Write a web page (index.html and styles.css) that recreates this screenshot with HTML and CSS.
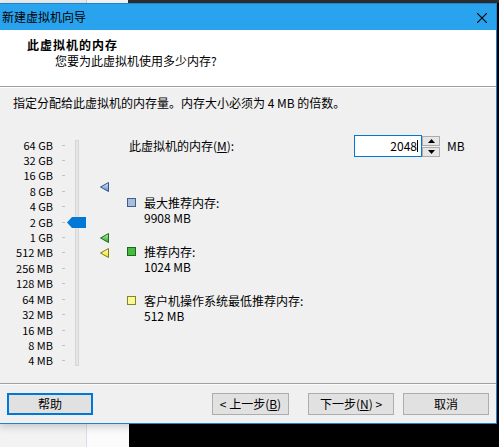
FILE: index.html
```html
<!DOCTYPE html>
<html lang="zh-CN">
<head>
<meta charset="utf-8">
<title>新建虚拟机向导</title>
<link rel="stylesheet" href="styles.css">
</head>
<body>
<div class="window">
  <div class="titlebar">
    <span class="title">新建虚拟机向导</span>
    <svg class="close" width="10" height="10" viewBox="0 0 10 10"><path d="M0 0L10 10M10 0L0 10" stroke="#000" stroke-width="1.1"/></svg>
  </div>
  <div class="header">
    <div class="h-title">此虚拟机的内存</div>
    <div class="h-sub">您要为此虚拟机使用多少内存?</div>
  </div>
  <div class="content">
    <div class="desc">指定分配给此虚拟机的内存量。内存大小必须为 4 MB 的倍数。</div>
    <div class="main">
      <div class="scale">
        <div class="rows">
          <div class="row"><span class="lbl">64 GB</span><span class="tick"></span></div>
          <div class="row"><span class="lbl">32 GB</span><span class="tick"></span></div>
          <div class="row"><span class="lbl">16 GB</span><span class="tick"></span></div>
          <div class="row"><span class="lbl">8 GB</span><span class="tick"></span></div>
          <div class="row"><span class="lbl">4 GB</span><span class="tick"></span></div>
          <div class="row"><span class="lbl">2 GB</span><span class="tick"></span></div>
          <div class="row"><span class="lbl">1 GB</span><span class="tick"></span></div>
          <div class="row"><span class="lbl">512 MB</span><span class="tick"></span></div>
          <div class="row"><span class="lbl">256 MB</span><span class="tick"></span></div>
          <div class="row"><span class="lbl">128 MB</span><span class="tick"></span></div>
          <div class="row"><span class="lbl">64 MB</span><span class="tick"></span></div>
          <div class="row"><span class="lbl">32 MB</span><span class="tick"></span></div>
          <div class="row"><span class="lbl">16 MB</span><span class="tick"></span></div>
          <div class="row"><span class="lbl">8 MB</span><span class="tick"></span></div>
          <div class="row"><span class="lbl">4 MB</span><span class="tick"></span></div>
        </div>
        <div class="track"></div>
        <div class="thumb"></div>
        <svg class="marker" style="top:47px" width="9" height="10" viewBox="0 0 9 10">
          <defs><linearGradient id="gb" x1="0" y1="0" x2="0" y2="1"><stop offset="0" stop-color="#d4e2f6"/><stop offset="1" stop-color="#5f8fcf"/></linearGradient></defs>
          <polygon points="0.5,5 8.5,0.5 8.5,9.5" fill="url(#gb)" stroke="#2f5688" stroke-width="1"/>
        </svg>
        <svg class="marker" style="top:98px" width="9" height="10" viewBox="0 0 9 10">
          <defs><linearGradient id="gg" x1="0" y1="0" x2="0" y2="1"><stop offset="0" stop-color="#b8f0a8"/><stop offset="1" stop-color="#2ea52e"/></linearGradient></defs>
          <polygon points="0.5,5 8.5,0.5 8.5,9.5" fill="url(#gg)" stroke="#1c6e1c" stroke-width="1"/>
        </svg>
        <svg class="marker" style="top:113px" width="9" height="10" viewBox="0 0 9 10">
          <defs><linearGradient id="gy" x1="0" y1="0" x2="0" y2="1"><stop offset="0" stop-color="#fffcc0"/><stop offset="1" stop-color="#f0e020"/></linearGradient></defs>
          <polygon points="0.5,5 8.5,0.5 8.5,9.5" fill="url(#gy)" stroke="#7f7a18" stroke-width="1"/>
        </svg>
      </div>
      <div class="panel">
        <div class="memrow">
          <span class="memlabel">此虚拟机的内存(<u>M</u>):</span>
          <div class="input"><span class="val">2048</span><span class="caret"></span></div>
          <div class="spin">
            <div class="spinbtn"><svg width="7" height="4" viewBox="0 0 7 4"><polygon points="3.5,0 7,4 0,4" fill="#000"/></svg></div>
            <div class="spinbtn"><svg width="7" height="4" viewBox="0 0 7 4"><polygon points="0,0 7,0 3.5,4" fill="#000"/></svg></div>
          </div>
          <span class="unit">MB</span>
        </div>
        <div class="legends">
          <div class="legend"><span class="sq sq-blue"></span><span>最大推荐内存:</span><span class="v">9908 MB</span></div>
          <div class="legend"><span class="sq sq-green"></span><span>推荐内存:</span><span class="v">1024 MB</span></div>
          <div class="legend"><span class="sq sq-yellow"></span><span>客户机操作系统最低推荐内存:</span><span class="v">512 MB</span></div>
        </div>
      </div>
    </div>
  </div>
  <div class="footer">
    <div class="btn btn-focus">帮助</div>
    <div class="btn btn-back">&lt; 上一步(<u>B</u>)</div>
    <div class="btn btn-next">下一步(<u>N</u>) &gt;</div>
    <div class="btn btn-cancel">取消</div>
  </div>
</div>
</body>
</html>
```

FILE: styles.css
```css
html, body {
  margin: 0;
  padding: 0;
}
body {
  width: 499px;
  height: 447px;
  overflow: hidden;
  font-family: "Noto Sans CJK SC", "Liberation Sans", sans-serif;
  font-size: 12px;
  color: #000;
  background:
    linear-gradient(to right, #ececec 0 86px, #cfcfcf 86px 87px, #f6f6f6 87px 128px, #2d2d2d 128px) top left / 100% 3px no-repeat,
    linear-gradient(to right, #f3f3f3 0 86px, #d3dfee 86px 87px, #fbfbfb 87px 129px, #000 129px);
}
.window {
  box-sizing: border-box;
  margin: 3px 0 0 -1px;
  width: 498px;
  height: 421px;
  border: 1px solid #1a86d2;
  background: #f0f0f0;
  display: flex;
  flex-direction: column;
  box-shadow: 0 3px 8px rgba(0, 0, 0, 0.18);
}
.titlebar {
  height: 26px;
  flex: none;
  background: #2aa3ee;
  display: flex;
  align-items: center;
  padding-left: 2px;
  line-height: 16px;
}
.close {
  margin-left: auto;
  margin-right: 9px;
  margin-top: 1px;
}
.header {
  box-sizing: border-box;
  height: 57px;
  flex: none;
  background: #fff;
  border-bottom: 1px solid #a0a0a0;
  padding-top: 7px;
  line-height: 16px;
}
.h-title {
  padding-left: 27px;
  font-weight: bold;
  letter-spacing: 1px;
}
.h-sub {
  padding-left: 55px;
}
.content {
  flex: 1;
  display: flex;
  flex-direction: column;
  padding-top: 8px;
  box-shadow: inset 0 1px 0 #fff;
}
.desc {
  padding-left: 13px;
  line-height: 16px;
}
.main {
  margin-top: 24px;
  display: flex;
}
.scale {
  position: relative;
  width: 127px;
  flex: none;
  display: flex;
  align-items: flex-start;
}
.rows {
  display: flex;
  flex-direction: column;
  margin-top: 2.3px;
}
.row {
  display: flex;
  align-items: center;
  height: 15.43px;
}
.lbl {
  width: 53px;
  text-align: right;
  font-size: 11px;
  line-height: 15px;
}
.tick {
  width: 3px;
  height: 1px;
  background: #c4c4c4;
  margin-left: 9px;
}
.track {
  box-sizing: border-box;
  margin-left: 10px;
  margin-top: 5px;
  width: 4px;
  height: 226px;
  background: #e6e6e6;
  border: 1px solid #d6d6d6;
}
.thumb {
  position: absolute;
  left: 67px;
  top: 82px;
  width: 19px;
  height: 11px;
  background: #0078d7;
  clip-path: polygon(0 50%, 5px 0, 100% 0, 100% 100%, 5px 100%);
}
.marker {
  position: absolute;
  left: 100px;
  display: block;
}
.panel {
  display: flex;
  flex-direction: column;
}
.memrow {
  display: flex;
  align-items: center;
  height: 22px;
}
.memlabel {
  width: 225px;
  padding-left: 2px;
  line-height: 16px;
}
.input {
  box-sizing: border-box;
  width: 68px;
  height: 22px;
  border: 1px solid #0078d7;
  background: #fff;
  display: flex;
  align-items: center;
  justify-content: flex-end;
  padding-right: 3px;
  line-height: 16px;
}
.caret {
  width: 1px;
  height: 12px;
  background: #000;
  margin-left: 0;
}
.spin {
  display: flex;
  flex-direction: column;
  gap: 1px;
  height: 22px;
  justify-content: center;
}
.spinbtn {
  box-sizing: border-box;
  width: 18px;
  height: 10px;
  border: 1px solid #acacac;
  background: #e6e6e6;
  display: flex;
  align-items: center;
  justify-content: center;
}
.spinbtn svg {
  display: block;
}
.unit {
  margin-left: 7px;
  line-height: 16px;
}
.legends {
  margin-top: 37.5px;
  display: flex;
  flex-direction: column;
  gap: 19px;
}
.legend {
  display: grid;
  grid-template-columns: 17px auto;
  line-height: 15px;
}
.legend .v {
  grid-column: 2;
}
.sq {
  box-sizing: border-box;
  width: 9px;
  height: 9px;
  margin-top: 3px;
  grid-row: 1;
}
.sq-blue {
  background: #a9bedb;
  border: 1px solid #3e5f8e;
}
.sq-green {
  background: #47bb3f;
  border: 1px solid #1b6a1b;
}
.sq-yellow {
  background: #fbf996;
  border: 1px solid #86822a;
}
.footer {
  box-sizing: border-box;
  height: 40px;
  flex: none;
  border-top: 1px solid #a0a0a0;
  box-shadow: inset 0 1px 0 #fbfbfb;
  display: flex;
  align-items: flex-start;
  padding: 9px 7px 0 7px;
}
.btn {
  box-sizing: border-box;
  height: 22px;
  width: 86px;
  border: 1px solid #adadad;
  background: #e1e1e1;
  display: flex;
  align-items: center;
  justify-content: center;
  line-height: 16px;
}
.btn-focus {
  border: 2px solid #0078d7;
}
.btn-back {
  width: 77px;
  margin-left: auto;
}
.btn-next {
  margin-left: 19px;
}
.btn-cancel {
  margin-left: 9px;
}
u {
  text-decoration: underline;
  text-underline-offset: 1px;
}
```
